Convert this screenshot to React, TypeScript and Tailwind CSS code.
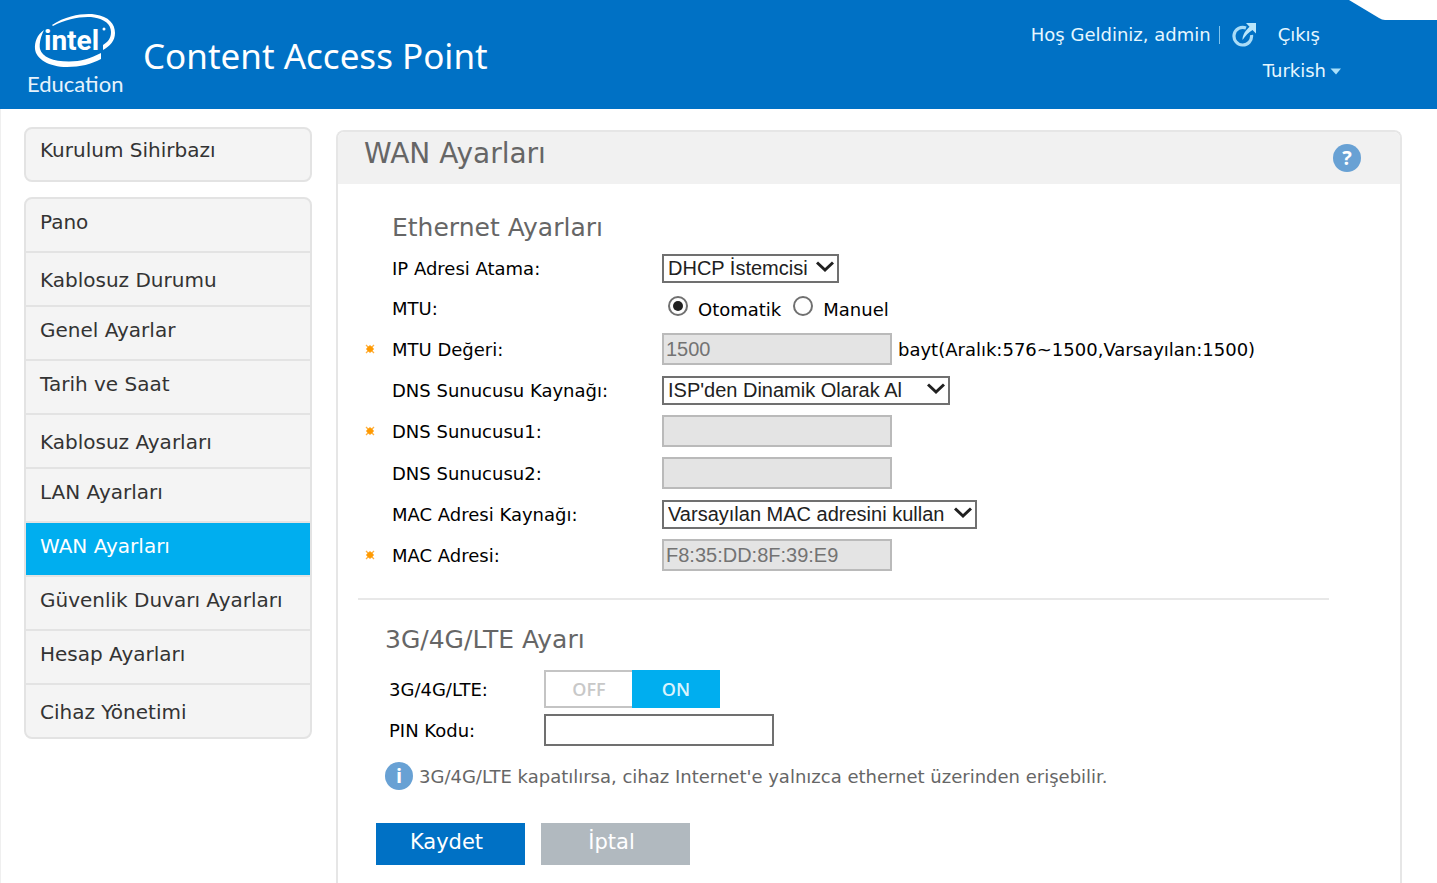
import React, { useState } from 'react';

const MENU_ITEMS = [
  { label: 'Pano' },
  { label: 'Kablosuz Durumu', centered: true },
  { label: 'Genel Ayarlar' },
  { label: 'Tarih ve Saat' },
  { label: 'Kablosuz Ayarları', centered: true },
  { label: 'LAN Ayarları' },
  { label: 'WAN Ayarları', active: true },
  { label: 'Güvenlik Duvarı Ayarları' },
  { label: 'Hesap Ayarları' },
  { label: 'Cihaz Yönetimi', centered: true },
];

function Logo() {
  return (
    <svg width="100" height="88" viewBox="0 0 100 88" fill="none" aria-label="Intel Education" role="img">
      <path
        d="M25 13C40 3 58 1 68 2.500C82 4.500 88 12 88 21C88 29 83 34 76 38V33C81 30 84 26 84 20C84 12 77 7 67 5.500C55 4 40 7 26 14Z"
        fill="#fff"
      />
      <path
        d="M17 18C10 23 7.500 30 8 37C9 47 22 55 40 55C53 55 65 52 74 47V41C64 46 54 49.500 42 49.500C26 49.500 15 45 13 37C12 31 14 24 17 18Z"
        fill="#fff"
      />
      <text x="17" y="38" fill="#fff" fontFamily="Roboto, sans-serif" fontWeight="700" fontSize="28">
        intel
      </text>
      <circle cx="77" cy="17" r="1.500" fill="#fff" />
      <text x="0" y="80" fill="#e6f3fc" fontFamily="Lato, sans-serif" fontSize="22">
        Education
      </text>
    </svg>
  );
}

function Header() {
  return (
    <header className="relative flex h-[109px] shrink-0 items-start justify-between bg-[#0071c5] text-white">
      <div className="flex pl-[27px] pt-3">
        <Logo />
        <h1 className="ml-4 mt-5 font-['Noto_Sans',sans-serif] text-[35px] leading-[48px]">Content Access Point</h1>
      </div>

      <div className="flex flex-col items-end pr-[95px] pt-[17px] text-[18px] leading-9 text-[#e6f7ff]">
        <div className="flex items-center pr-[22px]">
          <span>Hoş Geldiniz, admin</span>
          <span className="ml-2 h-[18px] w-px bg-[#7fc4ee]" />
          <svg className="ml-3" width="26" height="26" viewBox="0 0 26 26" fill="none">
            <path d="M14 6A8.800 8.800 0 1 0 19.500 13" stroke="#a9dcf7" strokeWidth="3.200" />
            <path d="M14 1H24V11.500L20.500 8C16.500 10.500 13.500 13.500 10.500 18C10.500 13 13.500 8.500 17.500 4.800Z" fill="#b9e6fb" />
          </svg>
          <a href="#logout" className="ml-5">Çıkış</a>
        </div>
        <button type="button" className="flex items-center gap-1">
          Turkish
          <svg width="12" height="7" viewBox="0 0 12 7">
            <path d="M0.500 0.500H11L6 6.500Z" fill="#a9e0fa" />
          </svg>
        </button>
      </div>

      <svg className="absolute right-0 top-0" width="88" height="20" viewBox="0 0 88 20">
        <path d="M0 0H88V20H36Q33 20 30 18Z" fill="#fff" />
      </svg>
    </header>
  );
}

function Sidebar() {
  return (
    <nav className="w-72 shrink-0 pt-[18px] text-[20px] text-[#333]">
      <a
        href="#wizard"
        className="flex h-[55px] items-center rounded-lg border-2 border-[#e3e3e3] bg-[#f4f4f4] pb-2.5 pl-3.5"
      >
        Kurulum Sihirbazı
      </a>
      <ul className="mt-[15px] divide-y-2 divide-[#e3e3e3] overflow-hidden rounded-lg border-2 border-[#e3e3e3] bg-[#f4f4f4]">
        {MENU_ITEMS.map((item) => (
          <li key={item.label}>
            <a
              href="#menu"
              className={`flex h-[52px] items-center pl-3.5 ${item.centered ? 'pt-0.5' : 'pb-1.5'} ${
                item.active ? 'bg-[#00aeef] text-white' : ''
              }`}
            >
              {item.label}
            </a>
          </li>
        ))}
      </ul>
    </nav>
  );
}

function RequiredMark() {
  return (
    <svg width="10" height="10" viewBox="0 0 10 10" aria-hidden="true">
      <path d="M1 1L9 9M9 1L1 9M5 1V9M1 5H9" stroke="#ffb040" strokeWidth="1.300" />
      <circle cx="5" cy="5" r="3" fill="#ff9a00" />
    </svg>
  );
}

function Row({ id, label, required = false, tall = false, children }) {
  return (
    <div className={`flex items-center ${tall ? 'h-[42px]' : 'h-10'}`}>
      <span className="w-[27px] shrink-0">{required && <RequiredMark />}</span>
      <label htmlFor={id} className="w-[270px] shrink-0">{label}</label>
      {children}
    </div>
  );
}

function Select({ id, width, value }) {
  return (
    <span className={`relative ${width}`}>
      <select
        id={id}
        className="block h-[29px] w-full appearance-none border-2 border-[#707070] bg-white pl-1 font-['Liberation_Sans',sans-serif] text-[20px] leading-6 text-[#212121]"
      >
        <option>{value}</option>
      </select>
      <svg className="pointer-events-none absolute right-[5px] top-[7px]" width="18" height="13" viewBox="0 0 18 13">
        <path d="M1 1.500L9 9L17 1.500" stroke="#212121" strokeWidth="3" fill="none" />
      </svg>
    </span>
  );
}

function TextInput({ id, value = '', disabled = false }) {
  return (
    <input
      id={id}
      type="text"
      defaultValue={value}
      disabled={disabled}
      className="h-8 w-[230px] border-2 border-[#707070] bg-white px-0.5 font-['Liberation_Sans',sans-serif] text-[20px] text-[#212121] disabled:border-[#bababa] disabled:bg-[#e4e4e4] disabled:text-[#737373]"
    />
  );
}

function Radio({ id, label, defaultChecked = false }) {
  return (
    <>
      <input
        id={id}
        type="radio"
        name="mtu"
        defaultChecked={defaultChecked}
        className="mb-1 flex size-5 appearance-none items-center justify-center rounded-full border-2 border-[#707070] before:size-2.5 before:rounded-full checked:before:bg-[#212121]"
      />
      <label htmlFor={id} className="ml-2.5 mr-3 pt-0.5">{label}</label>
    </>
  );
}

function Badge({ children }) {
  return (
    <span className="flex size-7 shrink-0 items-center justify-center rounded-full bg-[#68a1d4] font-['Open_Sans',sans-serif] text-[20px] font-bold leading-7 text-white">
      {children}
    </span>
  );
}

function MobileSettings() {
  const [enabled, setEnabled] = useState(true);

  return (
    <section className="pl-[47px] pt-5">
      <h3 className="text-[25px] leading-10 text-[#666]">3G/4G/LTE Ayarı</h3>
      <div className="mt-2.5 flex h-[38px] items-center pl-1">
        <label htmlFor="lte" className="w-[155px] shrink-0">3G/4G/LTE:</label>
        <button
          id="lte"
          type="button"
          onClick={() => setEnabled(!enabled)}
          className="flex h-[38px] font-['Open_Sans',sans-serif] text-[18px] font-semibold"
        >
          <span
            className={`flex h-full w-[88px] items-center justify-center ${
              enabled ? 'border-2 border-r-0 border-[#c4c4c4] text-[#c8c8c8]' : 'bg-[#00aeef] text-white'
            }`}
          >
            OFF
          </span>
          <span
            className={`flex h-full w-[88px] items-center justify-center ${
              enabled ? 'bg-[#00aeef] text-[#d9f3fd]' : 'border-2 border-l-0 border-[#c4c4c4] text-[#c8c8c8]'
            }`}
          >
            ON
          </span>
        </button>
      </div>
      <div className="mt-1.5 flex h-8 items-center pl-1">
        <label htmlFor="pin" className="w-[155px] shrink-0">PIN Kodu:</label>
        <TextInput id="pin" />
      </div>
      <p className="mt-4 flex items-center gap-1.5 text-[#666]">
        <Badge>i</Badge>
        3G/4G/LTE kapatılırsa, cihaz Internet'e yalnızca ethernet üzerinden erişebilir.
      </p>
    </section>
  );
}

export default function App() {
  return (
    <div className="flex min-h-screen flex-col bg-white font-[Verdana,'DejaVu_Sans',sans-serif] text-[18px] text-black">
      <Header />

      <div className="flex flex-1 gap-6 border-l border-[#efefef] pl-[23px] pr-[35px]">
        <Sidebar />

        <main className="mt-[21px] min-w-0 flex-1 rounded-t-lg border-2 border-b-0 border-[#e6e6e6]">
          <div className="flex h-[52px] items-center justify-between rounded-t-md bg-[#f1f1f1] pl-[26px] pr-[39px]">
            <h2 className="pb-2 text-[28px] leading-10 text-[#666]">WAN Ayarları</h2>
            <button type="button" aria-label="Yardım">
              <Badge>?</Badge>
            </button>
          </div>

          <section className="pl-[26px] pt-6">
            <h3 className="pl-7 text-[25px] leading-10 text-[#666]">Ethernet Ayarları</h3>
            <div className="pl-px">
              <Row id="ip" label="IP Adresi Atama:">
                <Select id="ip" width="w-[177px]" value="DHCP İstemcisi" />
              </Row>
              <Row id="mtu-auto" label="MTU:">
                <div className="flex items-center pl-1.5">
                  <Radio id="mtu-auto" label="Otomatik" defaultChecked />
                  <Radio id="mtu-manual" label="Manuel" />
                </div>
              </Row>
              <Row id="mtu" label="MTU Değeri:" required tall>
                <TextInput id="mtu" value="1500" disabled />
                <span className="ml-1.5">bayt(Aralık:576~1500,Varsayılan:1500)</span>
              </Row>
              <Row id="dns-source" label="DNS Sunucusu Kaynağı:">
                <Select id="dns-source" width="w-72" value="ISP'den Dinamik Olarak Al" />
              </Row>
              <Row id="dns1" label="DNS Sunucusu1:" required tall>
                <TextInput id="dns1" disabled />
              </Row>
              <Row id="dns2" label="DNS Sunucusu2:" tall>
                <TextInput id="dns2" disabled />
              </Row>
              <Row id="mac-source" label="MAC Adresi Kaynağı:">
                <Select id="mac-source" width="w-[315px]" value="Varsayılan MAC adresini kullan" />
              </Row>
              <Row id="mac" label="MAC Adresi:" required tall>
                <TextInput id="mac" value="F8:35:DD:8F:39:E9" disabled />
              </Row>
            </div>
          </section>

          <hr className="ml-5 mr-[71px] mt-[22px] border-t-2 border-[#e8e8e8]" />

          <MobileSettings />

          <div className="mt-[33px] flex gap-4 pl-[38px] text-[21px] text-white">
            <button type="button" className="h-[42px] w-[149px] bg-[#0071c5] pb-0.5 pr-2">Kaydet</button>
            <button type="button" className="h-[42px] w-[149px] bg-[#b1b9bf] pb-0.5 pr-2">İptal</button>
          </div>
        </main>
      </div>
    </div>
  );
}
